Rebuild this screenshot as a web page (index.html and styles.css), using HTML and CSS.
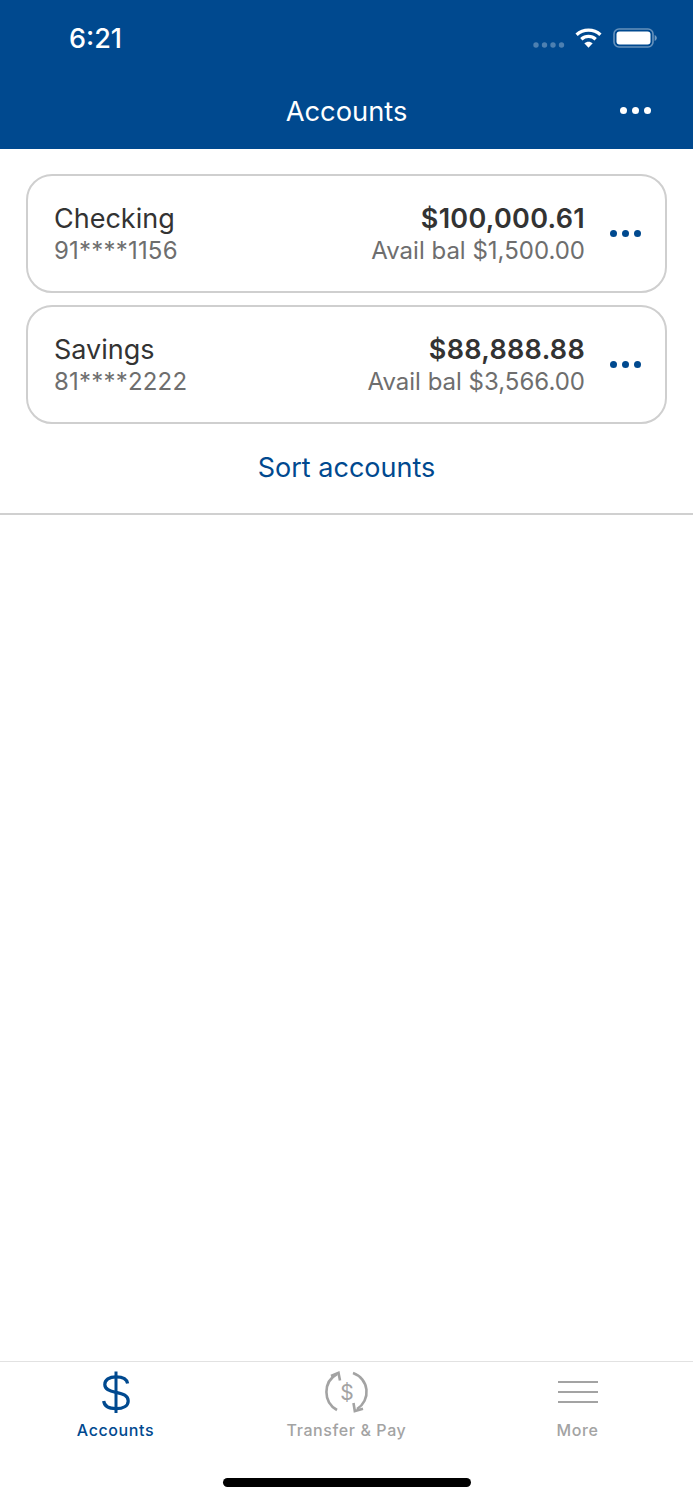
FILE: index.html
```html
<!DOCTYPE html>
<html lang="en">
<head>
<meta charset="utf-8">
<title>Accounts</title>
<link rel="stylesheet" href="styles.css">
</head>
<body>
<div class="phone">
  <header class="header">
    <div class="status">
      <span class="time">6:21</span>
      <div class="status-icons">
        <svg class="signal" width="32" height="6" viewBox="0 0 32 6"><g fill="#fff" opacity=".3"><circle cx="3" cy="3" r="2.7"/><circle cx="11.500" cy="3" r="2.7"/><circle cx="20" cy="3" r="2.7"/><circle cx="28.500" cy="3" r="2.7"/></g></svg>
        <svg class="wifi" width="27" height="20" viewBox="0 0 27 20"><g fill="none" stroke="#fff" stroke-width="3.400"><path d="M1.600 6.800C8.300 .6 18.700 .6 25.400 6.800"/><path d="M6.300 11.200C10.500 7.400 16.500 7.400 20.700 11.200"/></g><path d="M13.500 19.800 9.300 15.200C11.800 13.100 15.200 13.100 17.700 15.200Z" fill="#fff"/></svg>
        <svg class="battery" width="44" height="20" viewBox="0 0 44 20"><rect x="1" y="1" width="39" height="18" rx="5" fill="none" stroke="#fff" stroke-opacity=".4" stroke-width="1.600"/><rect x="3.500" y="3.500" width="34" height="13" rx="3" fill="#fff"/><path d="M41.600 7v6c1.300-.5 2.200-1.700 2.200-3s-.9-2.500-2.200-3z" fill="#fff" opacity=".45"/></svg>
      </div>
    </div>
    <div class="nav">
      <h1 class="nav-title">Accounts</h1>
      <div class="dots dots-white nav-dots"><i></i><i></i><i></i></div>
    </div>
  </header>

  <main class="content">
    <section class="cards">
      <article class="card">
        <div class="card-left">
          <div class="name">Checking</div>
          <div class="sub acct">91****1156</div>
        </div>
        <div class="card-right">
          <div class="amount">$100,000.61</div>
          <div class="sub">Avail bal $1,500.00</div>
        </div>
        <div class="dots dots-blue"><i></i><i></i><i></i></div>
      </article>
      <article class="card">
        <div class="card-left">
          <div class="name">Savings</div>
          <div class="sub acct">81****2222</div>
        </div>
        <div class="card-right">
          <div class="amount">$88,888.88</div>
          <div class="sub">Avail bal $3,566.00</div>
        </div>
        <div class="dots dots-blue"><i></i><i></i><i></i></div>
      </article>
    </section>
    <div class="sort">Sort accounts</div>
  </main>

  <footer class="tabbar">
    <div class="tabs">
      <div class="tab tab-active">
        <svg class="tab-icon" width="44" height="44" viewBox="0 0 44 44"><g fill="none" stroke="#00498f" stroke-width="3.200"><path d="M33.600 13.500C33 9.300 28.800 6.800 22 6.800 15.200 6.800 10.800 9.800 10.800 14.500 10.800 19.200 15 20.900 22 22.400 29.200 23.900 34.200 25.600 34.200 31 34.200 35.900 29.200 38.600 22 38.600 14.800 38.600 10.300 36 9.700 31"/><path d="M22 1.500V43" stroke-width="3"/></g></svg>
        <span class="tab-label">Accounts</span>
      </div>
      <div class="tab">
        <svg class="tab-icon" width="44" height="44" viewBox="0 0 44 44"><g fill="none" stroke="#a3a3a3" stroke-width="2.600"><path d="M12 40A20.600 20.600 0 0 1 12 4"/><path d="M6 6 13.500 2.800 15 10.500"/><path d="M28 3A20 20 0 0 1 32 39"/><path d="M28.500 33 29.800 41 38 38.800"/></g><text class="tab-dollar" x="22" y="30" text-anchor="middle">$</text></svg>
        <span class="tab-label">Transfer &amp; Pay</span>
      </div>
      <div class="tab">
        <div class="tab-icon hamburger"><i></i><i></i><i></i></div>
        <span class="tab-label">More</span>
      </div>
    </div>
    <div class="home-indicator"></div>
  </footer>
</div>
</body>
</html>
```

FILE: styles.css
```css
* { box-sizing: border-box; }
html, body { margin: 0; padding: 0; background: #fff; }
body { font-family: Inter, "Liberation Sans", sans-serif; }

.phone {
  width: 693px;
  height: 1500px;
  display: flex;
  flex-direction: column;
  overflow: hidden;
}

.header {
  height: 149px;
  flex: none;
  background: #00498f;
  color: #fff;
  display: flex;
  flex-direction: column;
}

.status {
  height: 76px;
  padding: 0 36px 0 69px;
  display: flex;
  justify-content: space-between;
  align-items: center;
}
.time { font-size: 27px; font-weight: 500; line-height: 1; }
.status-icons { display: flex; align-items: center; }
.signal { margin-right: 10px; margin-top: 13px; }
.wifi { margin-right: 11px; }

.nav {
  flex: 1;
  display: flex;
  align-items: center;
  justify-content: center;
  position: relative;
  padding-bottom: 2px;
}
.nav-title { margin: 0; font-size: 27.3px; font-weight: 400; line-height: 1; }
.nav-dots { position: absolute; right: 42px; top: 31px; }

.dots { display: flex; gap: 5px; }
.dots i { width: 7px; height: 7px; border-radius: 50%; display: block; }
.dots-white i { background: #fff; }
.dots-blue i { background: #00498f; }

.content { flex: 1; }
.cards {
  padding: 25px 26px 0;
  display: flex;
  flex-direction: column;
  gap: 12px;
}
.card {
  height: 119px;
  border: 2px solid #cfcfcf;
  border-radius: 26px;
  display: flex;
  align-items: center;
  padding: 1px 24px 0 26px;
}
.card-left { flex: 1; }
.card-right { text-align: right; margin-right: 25px; }
.name { font-size: 27px; line-height: 31px; color: #333; }
.amount { font-size: 27px; line-height: 31px; font-weight: 600; letter-spacing: .3px; color: #333; }
.sub { font-size: 24px; line-height: 31px; margin-top: 1px; color: #6e6e6e; }
.acct { letter-spacing: .2px; }
.dots-blue { margin-bottom: 1px; }

.sort {
  height: 91px;
  border-bottom: 2px solid #d0d0d0;
  display: flex;
  align-items: center;
  justify-content: center;
  font-size: 27px;
  color: #00498f;
  padding-bottom: 2px;
}

.tabbar {
  flex: none;
  height: 139px;
  border-top: 1px solid #e2e2e2;
  display: flex;
  flex-direction: column;
  align-items: center;
}
.tabs { width: 100%; display: grid; grid-template-columns: repeat(3, 1fr); }
.tab {
  display: flex;
  flex-direction: column;
  align-items: center;
  padding-top: 8px;
  gap: 5px;
}
.tab-icon { display: block; width: 44px; height: 44px; }
.tab-label {
  font-size: 16px;
  line-height: 22px;
  font-weight: 500;
  letter-spacing: .6px;
  color: #a3a3a3;
}
.tab-active .tab-label { color: #00498f; }
.tab-dollar { font-family: Inter, sans-serif; font-size: 21px; fill: #a3a3a3; }

.hamburger {
  width: 40px;
  display: flex;
  flex-direction: column;
  justify-content: center;
  gap: 8px;
}
.hamburger i { display: block; height: 2px; background: #a3a3a3; }

.home-indicator {
  width: 248px;
  height: 9px;
  margin-top: 37px;
  border-radius: 5px;
  background: #000;
}
```
